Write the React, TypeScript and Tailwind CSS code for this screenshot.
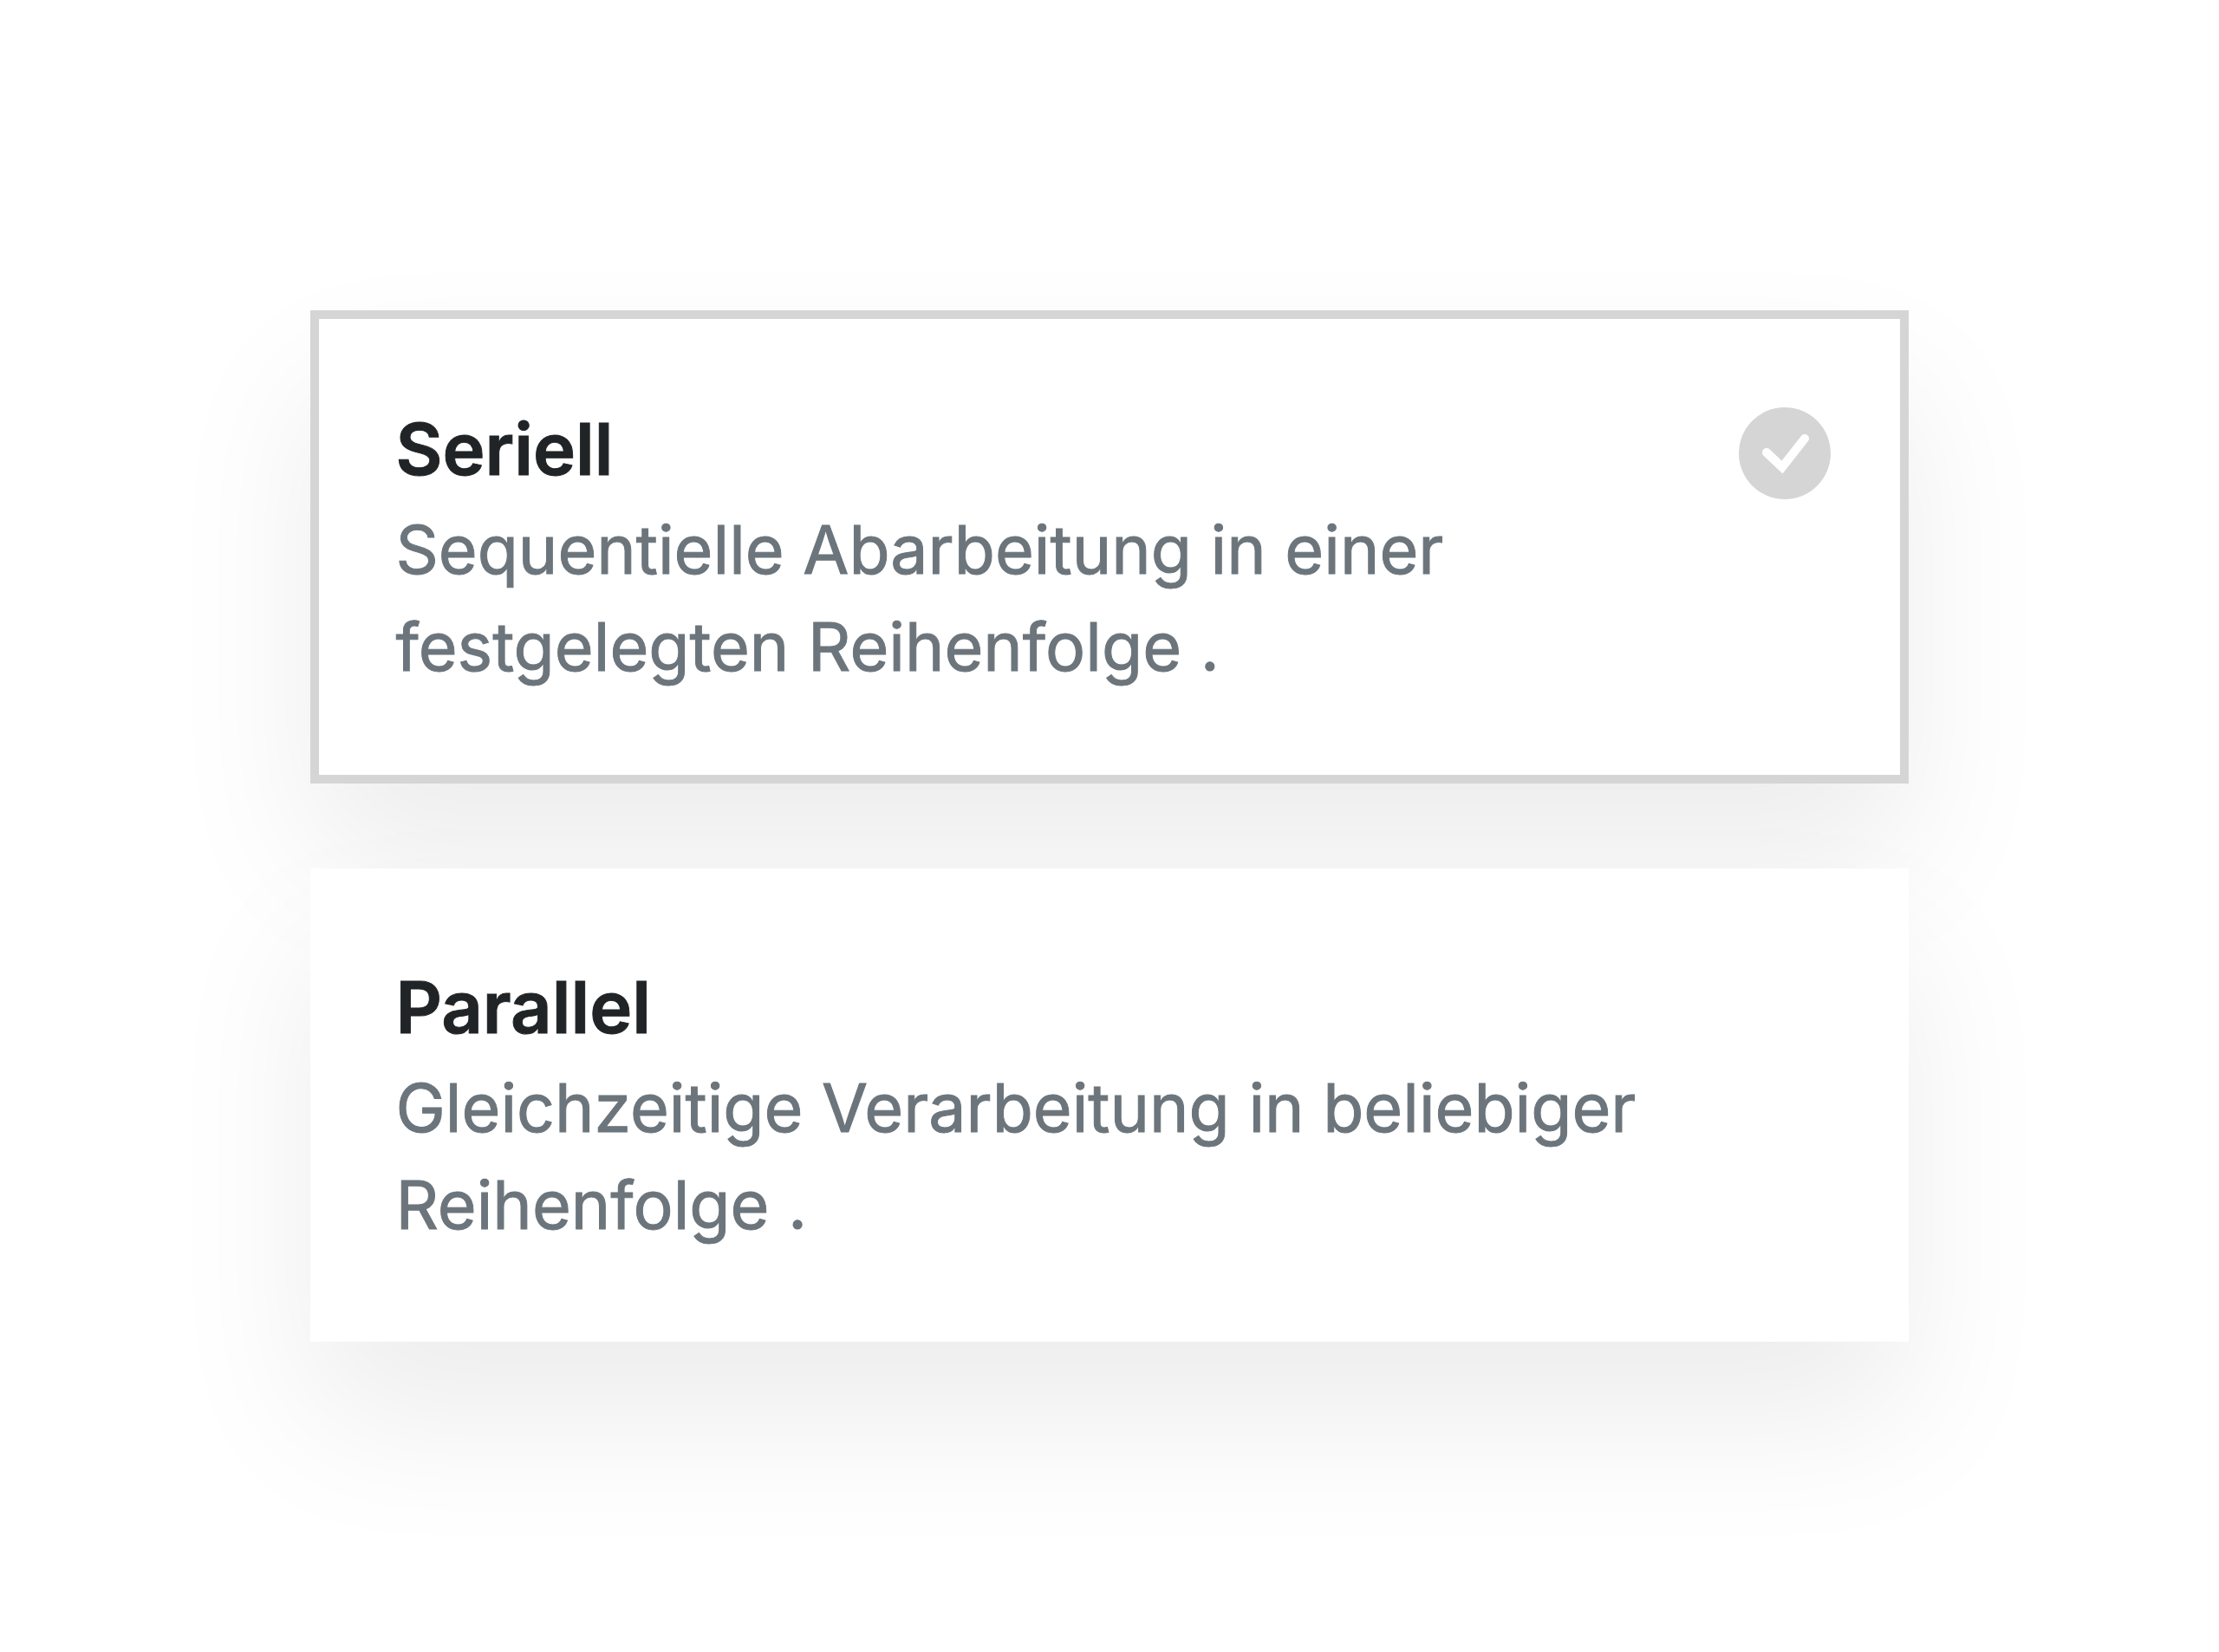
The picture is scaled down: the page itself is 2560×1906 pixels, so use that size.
import { useState } from "react"
import clsx from "clsx"

const options = [
  {
    id: "serial",
    title: "Seriell",
    description: "Sequentielle Abarbeitung in einer festgelegten Reihenfolge .",
  },
  {
    id: "parallel",
    title: "Parallel",
    description: "Gleichzeitige Verarbeitung in beliebiger Reihenfolge .",
  },
]

function CheckBadge() {
  return (
    <svg viewBox="0 0 106 106" className="mt-3 size-[106px] shrink-0" aria-hidden="true">
      <circle cx="53" cy="53" r="53" fill="#d5d5d5" />
      <path d="M32 52 L50 69 L76 36" fill="none" stroke="#fff" strokeWidth="10" strokeLinecap="round" />
    </svg>
  )
}

export default function App() {
  const [selected, setSelected] = useState("serial")

  return (
    <main className="flex min-h-screen flex-col justify-center bg-white font-['Inter',sans-serif]">
      <div role="radiogroup" aria-label="Workflow" className="mx-auto flex w-[72%] flex-col gap-[98px]">
        {options.map((option) => {
          const active = option.id === selected
          return (
            <label
              key={option.id}
              className={clsx(
                "relative flex cursor-pointer items-start justify-between gap-5 border-[10px] bg-white pt-[90px] pr-[80px] pb-[92px] pl-[88px] shadow-[0_90px_160px_rgba(0,0,0,0.075)]",
                active ? "border-[#d5d5d5]" : "border-white"
              )}
            >
              <input
                type="radio"
                name="workflow"
                value={option.id}
                checked={active}
                onChange={() => setSelected(option.id)}
                className="sr-only"
              />
              <span className="block [-webkit-text-stroke:1px]">
                <span className="block text-[83px] leading-[120px] font-semibold text-[#212426]">{option.title}</span>
                <span className="block text-[77px] leading-[112px] text-[#6c757c]">{option.description}</span>
              </span>
              {active && <CheckBadge />}
            </label>
          )
        })}
      </div>
    </main>
  )
}
